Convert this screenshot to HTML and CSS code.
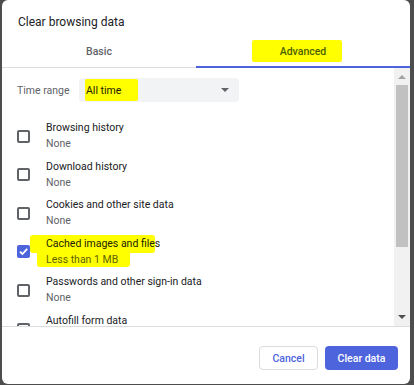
FILE: index.html
```html
<!DOCTYPE html>
<html lang="en">
<head>
    <meta charset="UTF-8">
    <title>Clear browsing data</title>
    <link rel="stylesheet" href="styles.css">
</head>
<body>
<div class="dialog">
    <div class="title">Clear browsing data</div>

    <div class="tabs">
        <div class="tab tab_basic">Basic</div>
        <div class="tab tab_adv"><span class="mark mark_adv">Advanced</span></div>
    </div>

    <div class="body">
        <div class="list">
            <div class="range">
                <span class="range_label">Time range</span>
                <div class="select">
                    <span class="mark mark_time">All time</span>
                    <span class="caret"></span>
                </div>
            </div>

            <div class="row">
                <span class="box"></span>
                <div class="text">
                    <div class="name">Browsing history</div>
                    <div class="sub">None</div>
                </div>
            </div>
            <div class="row">
                <span class="box"></span>
                <div class="text">
                    <div class="name">Download history</div>
                    <div class="sub">None</div>
                </div>
            </div>
            <div class="row">
                <span class="box"></span>
                <div class="text">
                    <div class="name">Cookies and other site data</div>
                    <div class="sub">None</div>
                </div>
            </div>
            <div class="row row_marked">
                <span class="box box_on">
                    <svg width="13" height="13" viewBox="0 0 13 13"><path d="M3 6.6 L5.4 9 L10.2 3.8" fill="none" stroke="#fff" stroke-width="1.8"/></svg>
                </span>
                <span class="mark_cached1"></span>
                <span class="mark_cached2"></span>
                <div class="text">
                    <div class="name name_marked">Cached images and files</div>
                    <div class="sub sub_marked">Less than 1 MB</div>
                </div>
            </div>
            <div class="row">
                <span class="box"></span>
                <div class="text">
                    <div class="name">Passwords and other sign-in data</div>
                    <div class="sub">None</div>
                </div>
            </div>
            <!-- last row runs under the footer, only its top shows -->
            <div class="row row_last">
                <span class="box"></span>
                <div class="text">
                    <div class="name">Autofill form data</div>
                </div>
            </div>
        </div>

        <div class="scroll">
            <span class="arrow_up"></span>
            <div class="track"><div class="thumb"></div></div>
            <span class="arrow_down"></span>
        </div>
    </div>

    <div class="foot">
        <div class="btn btn_cancel">Cancel</div>
        <div class="btn btn_clear">Clear data</div>
    </div>
</div>
</body>
</html>
```

FILE: styles.css
```css
body {
    margin: 0;
    background-color: #4d4d4d;
    font-family: Roboto, "Liberation Sans", sans-serif;
}

.dialog {
    width: 408px;
    height: 384px;
    margin-left: 2px;
    background-color: #ffffff;
    border-radius: 6px;
    display: flex;
    flex-direction: column;
    overflow: hidden;
}

.title {
    padding: 12px 16px 3px;
    line-height: 20px;
    font-size: 12px;
    color: #202124;
}

.tabs {
    display: flex;
    height: 33px;
}

.tab {
    display: flex;
    align-items: center;
    justify-content: center;
    font-size: 10.5px;
    font-weight: 500;
    box-sizing: border-box;
}

.tab_basic {
    width: 194px;
    color: #5f6368;
    border-bottom: 1px solid #dadce0;
}

.tab_adv {
    flex: 1;
    color: #4d5f1c;
    border-bottom: 2px solid #4e64dc;
}

.mark {
    position: relative;
    z-index: 0;
}

.mark::before {
    content: "";
    position: absolute;
    z-index: -1;
    background-color: #ffff00;
    border-radius: 2px;
}

.mark_adv {
    color: #4d5f00;
    top: 1px;
}

.mark_adv::before {
    left: -28px;
    right: -16px;
    top: -5px;
    bottom: -4px;
}

.body {
    display: flex;
    height: 258px;
    border-bottom: 1px solid #dadce0;
}

.list {
    flex: 1;
    overflow: hidden;
    padding-top: 10px;
}

.range {
    display: flex;
    align-items: center;
    padding-left: 15px;
    height: 24px;
    margin-bottom: 15px;
}

.range_label {
    width: 62px;
    font-size: 10.5px;
    color: #5f6368;
}

.select {
    width: 160px;
    height: 24px;
    background-color: #f1f3f4;
    border-radius: 4px;
    display: flex;
    align-items: center;
    justify-content: space-between;
    padding: 0 7px;
    box-sizing: border-box;
    font-size: 10.5px;
}

.mark_time {
    color: #202100;
}

.mark_time::before {
    left: -1px;
    right: -17px;
    top: -5px;
    bottom: -4px;
}

.caret {
    width: 0;
    height: 0;
    border-left: 4px solid transparent;
    border-right: 4px solid transparent;
    border-top: 4px solid #5f6368;
    margin-right: 3px;
}

.row {
    position: relative;
    display: flex;
    align-items: center;
    height: 38.5px;
    padding-left: 15px;
}

.row_last {
    align-items: flex-start;
    padding-top: 3px;
    box-sizing: border-box;
}

.row_last .box {
    margin-top: 10px;
}

.box {
    width: 13px;
    height: 13px;
    box-sizing: border-box;
    border: 2px solid #5f6368;
    border-radius: 2px;
    flex: none;
    margin-right: 16px;
}

.box_on {
    border: none;
    background-color: #4e64dc;
}

.box_on svg {
    display: block;
}

.text {
    position: relative;
    z-index: 1;
    font-size: 10.5px;
    line-height: 16px;
}

.name {
    color: #202124;
}

.sub {
    color: #5f6368;
}

.name_marked {
    color: #202100;
}

.sub_marked {
    color: #5f6300;
}

.mark_cached1, .mark_cached2 {
    position: absolute;
    background-color: #ffff00;
    border-radius: 3px;
}

.mark_cached1 {
    left: 28px;
    width: 125px;
    top: 2px;
    height: 18px;
}

.mark_cached2 {
    left: 35px;
    width: 93px;
    top: 18px;
    height: 16px;
}

.scroll {
    width: 16px;
    background-color: #f1f1f1;
    display: flex;
    flex-direction: column;
    align-items: center;
}

.arrow_up {
    margin-top: 7px;
    width: 0;
    height: 0;
    border-left: 4px solid transparent;
    border-right: 4px solid transparent;
    border-bottom: 4px solid #a3a3a3;
}

.track {
    flex: 1;
    width: 100%;
    padding: 6px 2px 0;
    box-sizing: border-box;
}

.thumb {
    height: 162px;
    background-color: #c1c1c1;
}

.arrow_down {
    margin-bottom: 7px;
    width: 0;
    height: 0;
    border-left: 4px solid transparent;
    border-right: 4px solid transparent;
    border-top: 4px solid #505050;
}

.foot {
    flex: 1;
    display: flex;
    justify-content: flex-end;
    align-items: flex-start;
    padding: 19px 12px 0 0;
    gap: 7px;
}

.btn {
    height: 24px;
    box-sizing: border-box;
    border-radius: 4px;
    font-size: 10.5px;
    font-weight: 500;
    display: flex;
    align-items: center;
    justify-content: center;
}

.btn_cancel {
    width: 59px;
    border: 1px solid #dadce0;
    color: #4e64dc;
}

.btn_clear {
    width: 73px;
    background-color: #4e64dc;
    color: #ffffff;
}
```
